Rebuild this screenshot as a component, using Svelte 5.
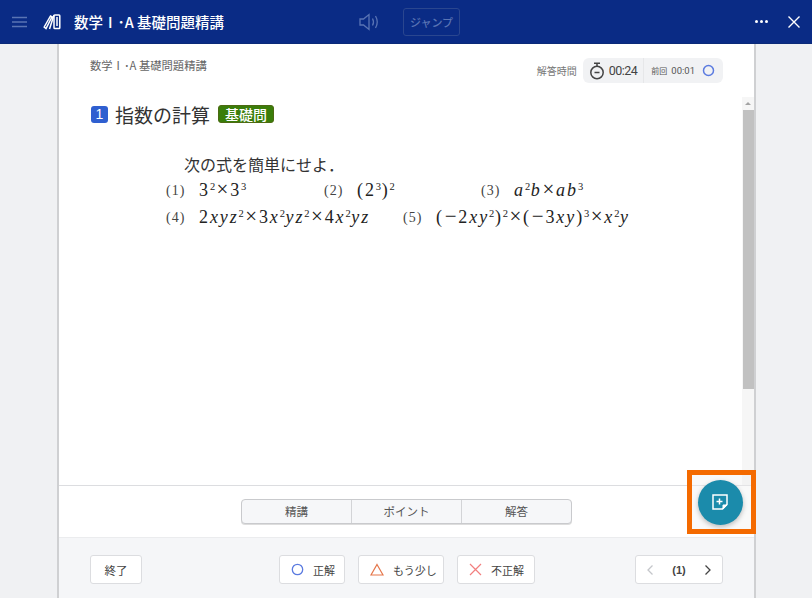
<script>
	let tabs = ['精講', 'ポイント', '解答']
</script>

<div class="page">
	<header class="topbar">
		<svg class="menu" width="18" height="12" viewBox="0 0 18 12"><path d="M1 1.5h15M1 6h15M1 10.5h15" stroke="#5a74b4" stroke-width="1.4" fill="none"/></svg>
		<svg class="logo" width="18" height="16" viewBox="0 0 18 16" fill="none" stroke="#fff" stroke-width="1.5"><path d="M1.200 13 7.500 2 9 2.800 3 14.500zM6.500 15 11 1"/><rect x="11" y="1" width="5.800" height="13.600" rx=".8"/><path d="M14 3v9"/></svg>
		<span class="title">数学Ⅰ･A 基礎問題精講</span>
		<svg class="speaker" width="22" height="18" viewBox="0 0 22 18" fill="none" stroke="#5a74b4" stroke-width="1.3"><path d="M1 6h3.500L10 1.500v15L4.500 12H1zM13.500 5.500q2 3.500 0 7M16.500 3q3.500 6 0 12"/></svg>
		<button class="jump">ジャンプ</button>
		<span class="spacer"></span>
		<span class="dots"><i></i><i></i><i></i></span>
		<svg class="close" width="14" height="14" viewBox="0 0 14 14"><path d="M1.500 1.500l11 11M12.500 1.500l-11 11" stroke="#fff" stroke-width="1.400"/></svg>
	</header>

	<div class="body">
		<aside></aside>
		<main class="sheet">
			<div class="meta">
				<span class="book">数学Ⅰ･A 基礎問題精講</span>
				<span class="time-label">解答時間</span>
				<div class="timer">
					<div class="now">
						<svg width="16" height="18" viewBox="0 0 16 18" fill="none" stroke="#444" stroke-width="1.500"><circle cx="8" cy="10.500" r="6.200"/><path d="M5 1.200h6M8 1.500v3M5.500 10.500h5"/></svg>
						<span>00:24</span>
					</div>
					<div class="prev">
						<small>前回</small>
						<span>00:01</span>
						<svg width="13" height="13" viewBox="0 0 13 13" fill="none"><circle cx="6.500" cy="6.500" r="5" stroke="#5b7be0" stroke-width="1.500"/></svg>
					</div>
				</div>
			</div>

			<div class="scroll-area">
				<div class="content">
					<h1><span class="num">1</span>指数の計算<span class="tag">基礎問</span></h1>
					<div class="problem">
						<p class="lead">次の式を簡単にせよ．</p>
						<div class="row">
							<span class="no">(1)</span><span class="f w1">3<sup>2</sup><span class="t">×</span>3<sup>3</sup></span>
							<span class="no">(2)</span><span class="f w2">(2<sup>3</sup>)<sup>2</sup></span>
							<span class="no">(3)</span><span class="f"><em>a</em><sup>2</sup><em>b</em><span class="t">×</span><em>ab</em><sup>3</sup></span>
						</div>
						<div class="row">
							<span class="no">(4)</span><span class="f w4">2<em>xyz</em><sup>2</sup><span class="t">×</span>3<em>x</em><sup>2</sup><em>yz</em><sup>2</sup><span class="t">×</span>4<em>x</em><sup>2</sup><em>yz</em></span>
							<span class="no">(5)</span><span class="f">(<span class="t">−</span>2<em>xy</em><sup>2</sup>)<sup>2</sup><span class="t">×</span>(<span class="t">−</span>3<em>xy</em>)<sup>3</sup><span class="t">×</span><em>x</em><sup>2</sup><em>y</em></span>
						</div>
					</div>
				</div>
				<div class="scrollbar">
					<span class="arrow"></span>
					<span class="thumb"></span>
				</div>
			</div>

			<div class="tabs">
				<div class="tab-group">
					{#each tabs as t}
						<button>{t}</button>
					{/each}
				</div>
			</div>

			<footer>
				<button class="btn end">終了</button>
				<div class="answers">
					<button class="btn good">
						<svg width="13" height="13" viewBox="0 0 13 13" fill="none"><circle cx="6.500" cy="6.500" r="5.200" stroke="#5b7be0" stroke-width="1.300"/></svg>
						正解
					</button>
					<button class="btn almost">
						<svg width="14" height="13" viewBox="0 0 14 13" fill="none"><path d="M7 1.500 13 12H1z" stroke="#e5764a" stroke-width="1.200"/></svg>
						もう少し
					</button>
					<button class="btn wrong">
						<svg width="13" height="13" viewBox="0 0 13 13" fill="none"><path d="M1 1l11 11M12 1 1 12" stroke="#f27f7f" stroke-width="1.200"/></svg>
						不正解
					</button>
				</div>
				<div class="pager">
					<svg width="8" height="12" viewBox="0 0 8 12" fill="none"><path d="M6.500 1.500 2 6l4.500 4.500" stroke="#c4c6ca" stroke-width="1.300"/></svg>
					<b>(1)</b>
					<svg width="8" height="12" viewBox="0 0 8 12" fill="none"><path d="M1.500 1.500 6 6l-4.500 4.500" stroke="#444" stroke-width="1.300"/></svg>
				</div>
			</footer>

			<div class="highlight">
				<button class="fab" aria-label="メモ">
					<svg width="18" height="18" viewBox="0 0 18 18" fill="none" stroke="#fff" stroke-width="1.500"><path d="M2 2h14v9.500L11.500 16H2z"/><path d="M16 12h-4v4z" fill="#fff" stroke-width="1"/><path d="M8.500 5.500v6M5.500 8.500h6"/></svg>
				</button>
			</div>
		</main>
		<aside></aside>
	</div>
</div>

<style>
	:global(body) {
		margin: 0;
		background: #f0f1f3;
	}
	.page {
		width: 812px;
		height: 598px;
		display: flex;
		flex-direction: column;
		overflow: hidden;
		font-family: "Noto Sans CJK JP", "Liberation Sans", sans-serif;
		color: #444;
	}
	button {
		font-family: inherit;
		cursor: pointer;
	}

	.topbar {
		height: 44px;
		flex: none;
		background: #0a2b85;
		display: flex;
		align-items: center;
		padding: 0 10px 0 11px;
		box-sizing: border-box;
		border-bottom: 1px solid #0b2a78;
	}
	.menu {
		margin-right: 14px;
	}
	.logo {
		margin-right: 13px;
	}
	.title {
		color: #fff;
		font-size: 14.500px;
		font-weight: 500;
		width: 286px;
	}
	.speaker {
		margin-left: -1px;
	}
	.jump {
		margin-left: 22px;
		width: 57px;
		height: 28px;
		padding: 0;
		font-size: 11px;
		font-weight: 500;
		color: #5a74b4;
		background: transparent;
		border: 1px solid #2a468f;
		border-radius: 3px;
	}
	.spacer {
		flex: 1;
	}
	.dots {
		display: flex;
		gap: 2px;
		margin-right: 19px;
	}
	.dots i {
		width: 3px;
		height: 3px;
		border-radius: 50%;
		background: #fff;
	}
	.close {
		margin-right: 1px;
	}

	.body {
		flex: 1;
		min-height: 0;
		display: grid;
		grid-template-columns: 57px 1fr 56px;
	}
	aside {
		background: #f0f1f3;
	}
	.sheet {
		position: relative;
		background: #fff;
		border-left: 2px solid #cfd0d2;
		border-right: 2px solid #cfd0d2;
		display: flex;
		flex-direction: column;
		min-height: 0;
	}

	.meta {
		height: 53px;
		flex: none;
		display: flex;
		align-items: flex-start;
		padding: 14px 31px 0 31px;
		box-sizing: border-box;
	}
	.book {
		font-size: 11.300px;
		color: #666;
		line-height: 15px;
		flex: 1;
	}
	.time-label {
		font-size: 10px;
		color: #777;
		margin-right: 6px;
		line-height: 25px;
	}
	.timer {
		height: 25px;
		background: #f1f2f4;
		border-radius: 6px;
		display: flex;
		align-items: center;
		font-family: "Roboto", "Noto Sans CJK JP", sans-serif;
	}
	.now {
		display: flex;
		align-items: center;
		gap: 4px;
		padding: 0 6px;
		font-size: 12.500px;
		letter-spacing: -.5px;
		height: 100%;
		border-right: 1px solid #e6e7e9;
	}
	.prev {
		display: flex;
		align-items: center;
		padding: 0 8px 0 7px;
		font-size: 9.500px;
		color: #555;
		gap: 4px;
	}
	.prev small {
		font-size: 8px;
		font-family: "Noto Sans CJK JP", sans-serif;
	}
	.prev svg {
		margin-left: 3px;
	}

	.scroll-area {
		flex: 1;
		min-height: 0;
		display: flex;
		border-bottom: 1px solid #dcdde0;
	}
	.content {
		flex: 1;
		padding-left: 32px;
	}
	h1 {
		margin: 0;
		height: 34px;
		display: flex;
		align-items: center;
		font-size: 19px;
		font-weight: 400;
		color: #333;
	}
	.num {
		width: 17px;
		height: 17px;
		border-radius: 3px;
		background: #2f5fd0;
		color: #fff;
		font: 500 14px/17px "Liberation Sans", sans-serif;
		text-align: center;
		margin-right: 7px;
	}
	.tag {
		margin-left: 8px;
		width: 56px;
		height: 18px;
		box-sizing: border-box;
		border: 1px solid #4c6a12;
		border-radius: 3px;
		background: #3a7d0a;
		color: #fff;
		font-size: 14px;
		line-height: 16px;
		text-align: center;
		font-weight: 500;
	}
	.problem {
		padding: 21px 0 0 75px;
		font-family: "Liberation Serif", "Noto Sans CJK JP", serif;
		color: #222;
	}
	.lead {
		margin: 0 0 0 18px;
		font-size: 16px;
		line-height: 25px;
		font-family: "Noto Sans CJK JP", serif;
		font-weight: 400;
		color: #333;
	}
	.row {
		display: flex;
		height: 27px;
		align-items: center;
		font-size: 18px;
		letter-spacing: 1.900px;
		white-space: nowrap;
	}
	.no {
		font-size: 14px;
		letter-spacing: 1px;
		width: 33px;
		color: #444;
	}
	.t {
		font-size: 21px;
		line-height: 0;
		letter-spacing: 1px;
		margin: 0 .8px;
	}
	.w1 {
		width: 125px;
	}
	.w2 {
		width: 124px;
	}
	.w4 {
		width: 204px;
	}
	sup {
		font-size: 10.500px;
		line-height: 0;
		vertical-align: 6px;
		letter-spacing: .6px;
	}

	.scrollbar {
		width: 12px;
		display: flex;
		flex-direction: column;
		align-items: center;
		background: #f6f6f6;
	}
	.arrow {
		height: 13px;
		flex: none;
		position: relative;
	}
	.arrow::after {
		content: "";
		position: absolute;
		top: 5px;
		left: -3px;
		border: 3px solid transparent;
		border-top: 0;
		border-bottom: 3px solid #a3a3a3;
	}
	.thumb {
		width: 11px;
		height: 279px;
		background: #c1c1c1;
	}

	.tabs {
		height: 52px;
		flex: none;
		display: flex;
		align-items: center;
		justify-content: center;
		border-bottom: 1px solid #ebecee;
		box-sizing: border-box;
	}
	.tab-group {
		display: flex;
		border: 1px solid #c9cacd;
		border-radius: 4px;
		background: #f6f7f9;
		overflow: hidden;
		box-shadow: 0 1px 0 #ddd;
	}
	.tab-group button {
		width: 110px;
		height: 23px;
		padding: 0 0 2px;
		border: 0;
		background: transparent;
		font-size: 11.500px;
		color: #555;
		border-right: 1px solid #d3d4d7;
	}
	.tab-group button:last-child {
		width: 109px;
		border-right: 0;
	}

	footer {
		height: 60px;
		flex: none;
		background: #f5f6f8;
		display: flex;
		align-items: center;
		padding: 3px 31px 0 31px;
		box-sizing: border-box;
	}
	.btn {
		height: 29px;
		display: inline-flex;
		align-items: center;
		gap: 9px;
		padding: 0 0 0 11px;
		background: #fff;
		border: 1px solid #dcdde0;
		border-radius: 3px;
		font-size: 11px;
		color: #444;
		box-sizing: border-box;
	}
	.end {
		width: 52px;
		justify-content: center;
		padding: 0;
		font-size: 11.500px;
	}
	.good {
		width: 66px;
	}
	.almost {
		width: 86px;
	}
	.wrong {
		width: 78px;
	}
	.answers {
		margin-left: 137px;
		display: flex;
		gap: 13px;
		flex: 1;
	}
	.pager {
		width: 88px;
		height: 29px;
		box-sizing: border-box;
		display: flex;
		align-items: center;
		justify-content: space-between;
		padding: 0 10px;
		background: #fff;
		border: 1px solid #dcdde0;
		border-radius: 3px;
		font-size: 11px;
		font-family: "Liberation Sans", sans-serif;
	}

	.highlight {
		position: absolute;
		left: 628px;
		top: 426px;
		width: 69px;
		height: 64px;
		box-sizing: border-box;
		border: 5px solid #f46a00;
		padding-right: 3px;
		display: flex;
		align-items: center;
		justify-content: center;
		background: rgba(240, 240, 240, .4);
	}
	.fab {
		width: 45px;
		height: 45px;
		padding: 0;
		border: 0;
		border-radius: 50%;
		background: #1b8bab;
		box-shadow: 0 2px 5px rgba(0, 0, 0, .25);
		display: flex;
		align-items: center;
		justify-content: center;
	}
</style>
